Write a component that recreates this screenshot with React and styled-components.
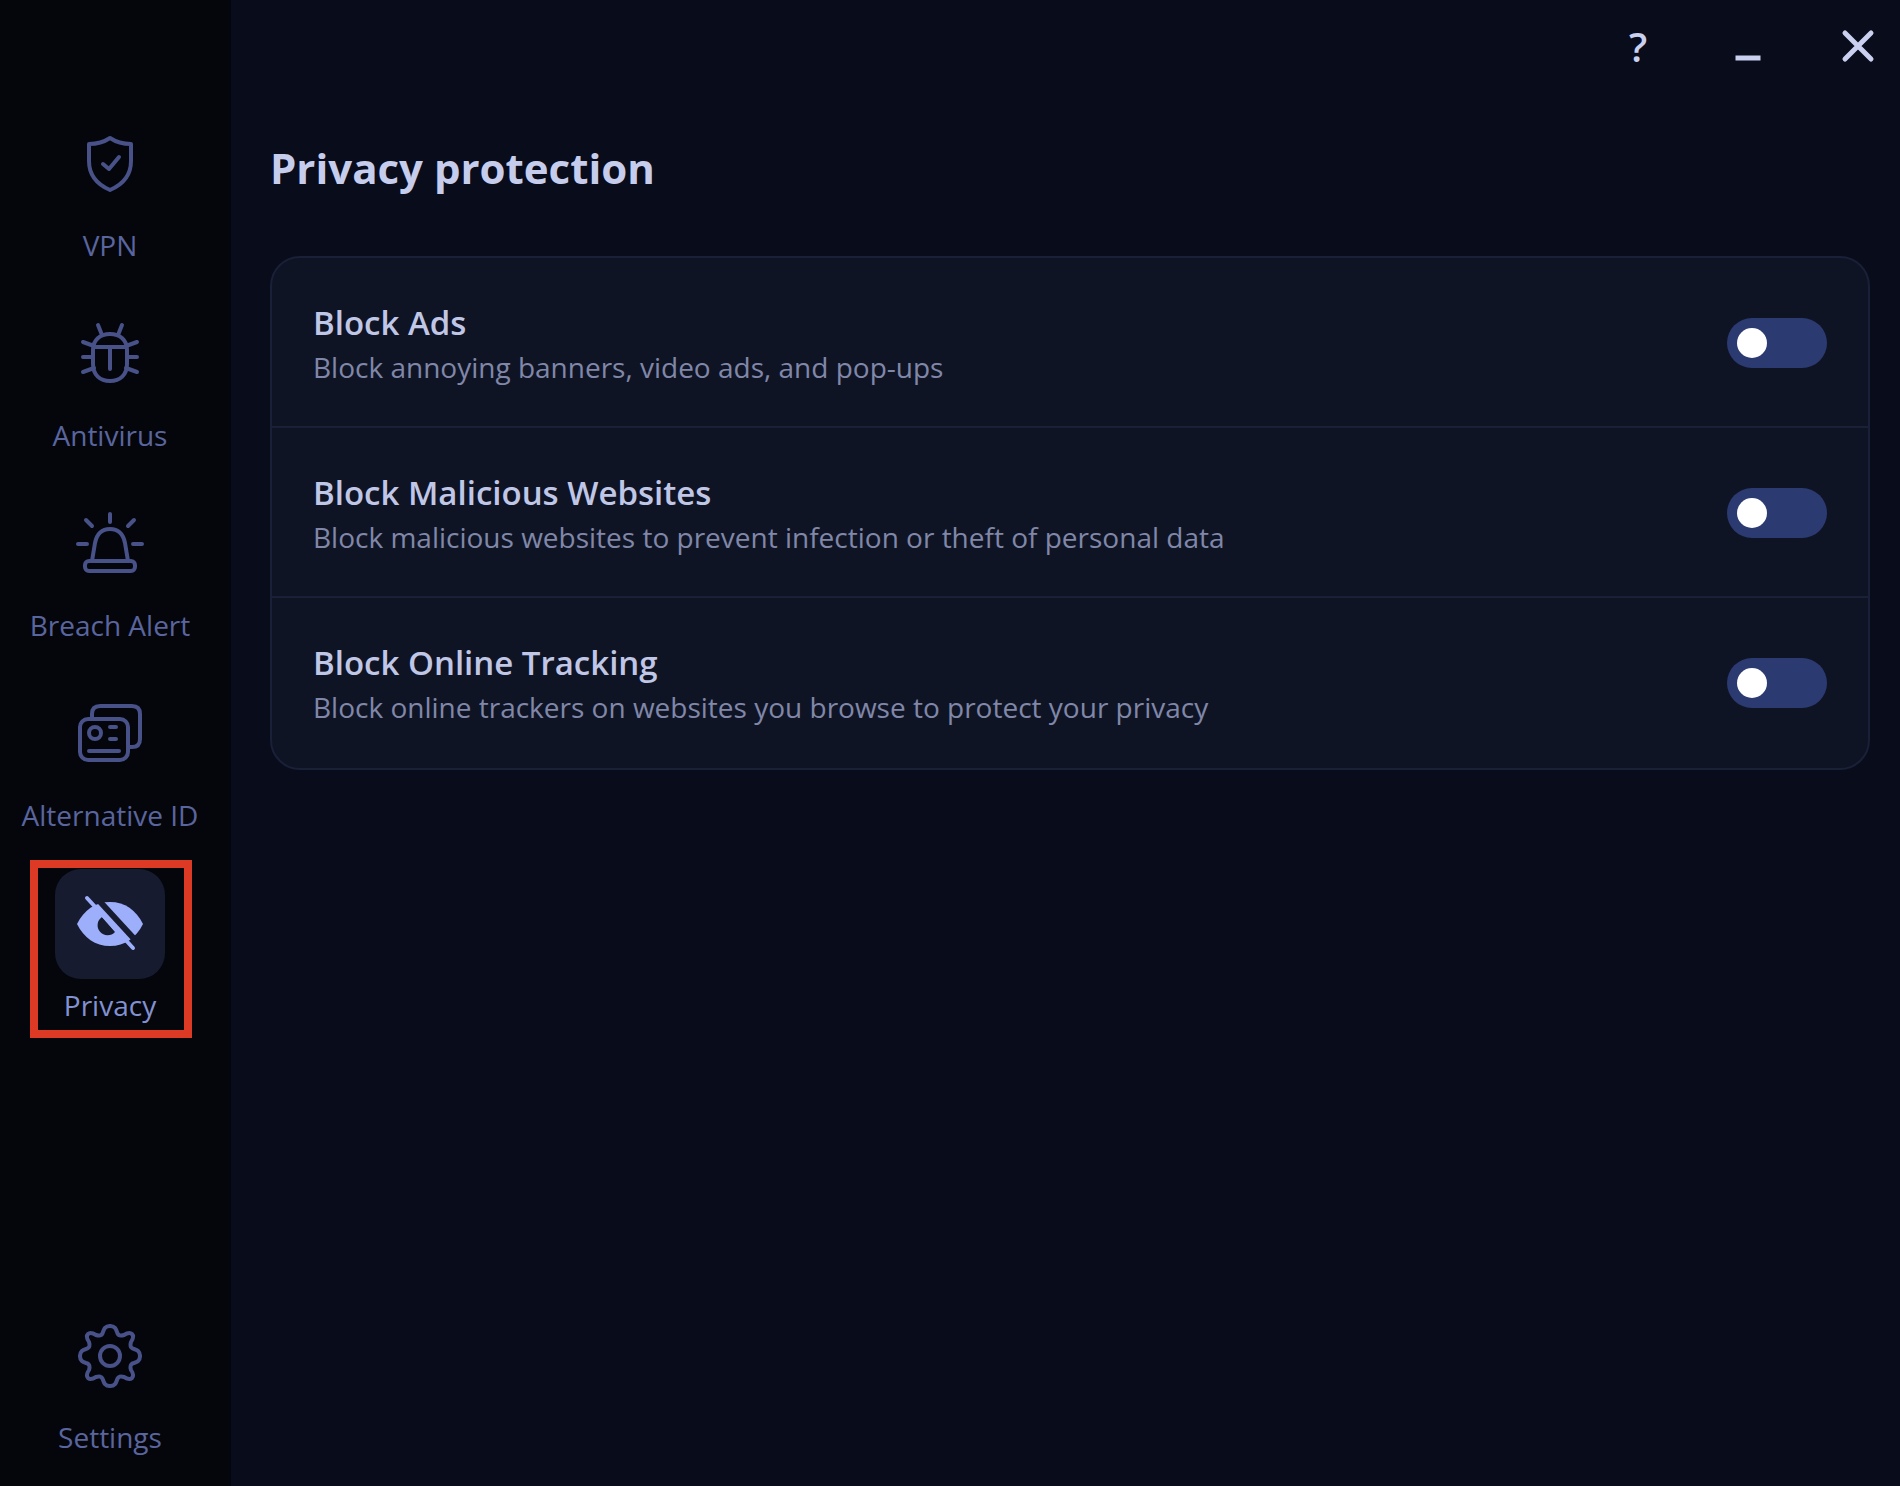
import { useState } from 'react';
import styled, { createGlobalStyle } from 'styled-components';

const VpnIcon = () => (
  <NavSvg viewBox="0 0 70 70">
    <path d="M35 9C41 13 49 15 56 15V32C56 45 49 55 35 61C21 55 14 45 14 32V15C21 15 29 13 35 9Z" />
    <path d="M28 35L34 40L44 28" />
  </NavSvg>
);

const AntivirusIcon = () => (
  <NavSvg viewBox="0 0 70 70">
    <path d="M18 31C18 21 25 15 35 15S52 21 52 31V45C52 56 45 62 35 62S18 56 18 45Z" />
    <path d="M19 28H51M35 28V50M27 16L23 6M43 16L47 6" />
    <path d="M19 27L8 23M18 38H8M19 49L8 53M51 27L62 23M52 38H62M51 49L62 53" />
  </NavSvg>
);

const BreachIcon = () => (
  <NavSvg viewBox="0 0 70 70">
    <rect x="10" y="52" width="50" height="10" rx="4" />
    <path d="M17 52L20 34C22 24 27 20 35 20S48 24 50 34L53 52" />
    <path d="M35 5V13M11 11L17 17M59 11L53 17M3 35H12M58 35H67" />
  </NavSvg>
);

const AlternativeIcon = () => (
  <NavSvg viewBox="0 0 70 70">
    <rect x="5" y="20" width="48" height="41" rx="8" />
    <path d="M17 20V15Q17 7 25 7H57Q65 7 65 15V40Q65 48 57 48H53" />
    <circle cx="20" cy="34" r="6" />
    <path d="M35 28H41M35 40H41M14 52H44" />
  </NavSvg>
);

const PrivacyIcon = () => (
  <NavSvg viewBox="0 0 70 70">
    <path
      d="M2 35C9 21 20 13 35 13S61 21 68 35C61 49 50 57 35 57S9 49 2 35Z"
      fill="currentColor"
      stroke="none"
    />
    <path d="M27 28A10 10 0 1 0 40 43Z" fill="#161b30" stroke="none" />
    <path d="M17 4L63 54" stroke="#161b30" strokeWidth="6" strokeLinecap="butt" />
    <path d="M12 9L58 59" />
  </NavSvg>
);

const gearQuarter = 'M35 5C40 5 41 8 42 11C43 15 46 15 49 14C52 12 55 11 57 13C59 15 58 18 56 21C55 24 55 27 59 28C62 29 65 30 65 35';

const SettingsIcon = () => (
  <NavSvg viewBox="0 0 70 70">
    {[0, 90, 180, 270].map((angle) => (
      <path key={angle} d={gearQuarter} transform={`rotate(${angle} 35 35)`} />
    ))}
    <circle cx="35" cy="35" r="10" />
  </NavSvg>
);

const navItems = [
  { label: 'VPN', Icon: VpnIcon },
  { label: 'Antivirus', Icon: AntivirusIcon },
  { label: 'Breach Alert', Icon: BreachIcon },
  { label: 'Alternative ID', Icon: AlternativeIcon },
  { label: 'Privacy', Icon: PrivacyIcon },
];

const options = [
  {
    id: 'ads',
    title: 'Block Ads',
    text: 'Block annoying banners, video ads, and pop-ups',
  },
  {
    id: 'malicious',
    title: 'Block Malicious Websites',
    text: 'Block malicious websites to prevent infection or theft of personal data',
  },
  {
    id: 'tracking',
    title: 'Block Online Tracking',
    text: 'Block online trackers on websites you browse to protect your privacy',
  },
];

export default function App() {
  const [page, setPage] = useState('Privacy');
  const [enabled, setEnabled] = useState({});

  const handleToggle = (id) => setEnabled(prev => ({ ...prev, [id]: !prev[id] }));

  const renderItem = ({ label, Icon }) => (
    <NavItem
      key={label}
      type="button"
      $active={page === label}
      onClick={() => setPage(label)}
    >
      <Tile $active={page === label}><Icon /></Tile>
      <NavLabel>{label}</NavLabel>
    </NavItem>
  );

  return (
    <>
      <GlobalStyle />
      <Window>
        <Sidebar>
          <NavGroup>{navItems.map(renderItem)}</NavGroup>
          {renderItem({ label: 'Settings', Icon: SettingsIcon })}
        </Sidebar>

        <Main>
          <TitleBar>
            <WindowButton type="button">?</WindowButton>
            <WindowButton type="button" aria-label="Minimize">
              <WindowSvg viewBox="0 0 40 40"><path d="M10 32H30" strokeLinecap="square" /></WindowSvg>
            </WindowButton>
            <WindowButton type="button" aria-label="Close">
              <WindowSvg viewBox="0 0 40 40"><path d="M7 7L33 33M33 7L7 33" /></WindowSvg>
            </WindowButton>
          </TitleBar>

          <Content>
            <Title>Privacy protection</Title>
            <Card>
              {options.map(({ id, title, text }) => (
                <Row key={id}>
                  <RowText>
                    <RowTitle htmlFor={id}>{title}</RowTitle>
                    <Description id={`${id}-text`}>{text}</Description>
                  </RowText>
                  <Toggle
                    id={id}
                    type="checkbox"
                    role="switch"
                    aria-describedby={`${id}-text`}
                    checked={!!enabled[id]}
                    onChange={() => handleToggle(id)}
                  />
                </Row>
              ))}
            </Card>
          </Content>
        </Main>
      </Window>
    </>
  );
}

// styled-components

const GlobalStyle = createGlobalStyle`
  *, *::before, *::after {
    box-sizing: border-box;
  }

  body {
    margin: 0;
    background: #090c1a;
    font-family: 'Open Sans', 'Noto Sans', sans-serif;
  }

  button {
    padding: 0;
    border: none;
    background: none;
    font: inherit;
    cursor: pointer;
  }
`;

const Window = styled.div`
  display: flex;
  min-height: 100vh;
`;

const Sidebar = styled.nav`
  flex: none;
  display: flex;
  flex-direction: column;
  justify-content: space-between;
  align-items: center;
  width: 231px;
  padding: 109px 11px 15px 0;
  background: #04060c;
`;

const NavGroup = styled.div`
  display: flex;
  flex-direction: column;
  align-items: center;
  gap: 20px;
`;

const NavItem = styled.button`
  position: relative;
  display: flex;
  flex-direction: column;
  align-items: center;
  height: 170px;
  color: ${({ $active }) => ($active ? '#8391d0' : '#5a659e')};

  &::after {
    content: '';
    display: ${({ $active }) => ($active ? 'block' : 'none')};
    position: absolute;
    top: -9px;
    left: 50%;
    width: 162px;
    height: 178px;
    margin-left: -80px;
    border: 8px solid #dc3a25;
  }
`;

const Tile = styled.span`
  display: flex;
  align-items: center;
  justify-content: center;
  width: 110px;
  height: 110px;
  border-radius: 26px;
  background: ${({ $active }) => ($active ? '#161b30' : 'transparent')};
  color: ${({ $active }) => ($active ? '#9daffb' : '#485188')};
`;

const NavLabel = styled.span`
  padding-top: 6px;
  font-size: 28px;
  line-height: 40px;
  white-space: nowrap;
`;

const NavSvg = styled.svg`
  width: 70px;
  height: 70px;
  fill: none;
  stroke: currentColor;
  stroke-width: 4;
  stroke-linecap: round;
  stroke-linejoin: round;
`;

const Main = styled.main`
  flex: 1;
  min-width: 0;
`;

const TitleBar = styled.header`
  display: flex;
  justify-content: flex-end;
  gap: 70px;
  padding: 26px 22px 0 0;
`;

const WindowButton = styled.button`
  display: flex;
  align-items: center;
  justify-content: center;
  width: 40px;
  height: 40px;
  color: #c9d0f0;
  font-size: 40px;
  font-weight: 600;
`;

const WindowSvg = styled.svg`
  width: 40px;
  height: 40px;
  fill: none;
  stroke: currentColor;
  stroke-width: 5;
  stroke-linecap: round;
`;

const Content = styled.section`
  padding: 72px 30px 0 39px;
`;

const Title = styled.h1`
  margin: 0;
  color: #c6cdec;
  font-size: 42px;
  font-weight: 700;
  line-height: 60px;
`;

const Card = styled.div`
  margin-top: 58px;
  padding-bottom: 2px;
  border: 2px solid #1a2038;
  border-radius: 30px;
  background: #0f1425;
`;

const Row = styled.div`
  display: flex;
  align-items: center;
  justify-content: space-between;
  gap: 40px;
  min-height: 168px;
  padding: 2px 41px 0;

  & + & {
    min-height: 170px;
    border-top: 2px solid #1a2038;
  }
`;

const RowText = styled.div`
  display: flex;
  flex-direction: column;
  padding-top: 4px;
`;

const RowTitle = styled.label`
  color: #c0c7e6;
  font-size: 33px;
  font-weight: 600;
  line-height: 44px;
`;

const Description = styled.p`
  margin: 0;
  color: #8087a8;
  font-size: 28px;
  line-height: 44px;
`;

const Toggle = styled.input`
  flex: none;
  display: flex;
  align-items: center;
  appearance: none;
  width: 100px;
  height: 50px;
  margin: 0;
  padding: 0 10px;
  border-radius: 25px;
  background: #2c3a72;
  cursor: pointer;

  &::before {
    content: '';
    width: 30px;
    height: 30px;
    border-radius: 50%;
    background: #fff;
  }

  &:checked {
    justify-content: flex-end;
    background: #5a72e0;
  }
`;
